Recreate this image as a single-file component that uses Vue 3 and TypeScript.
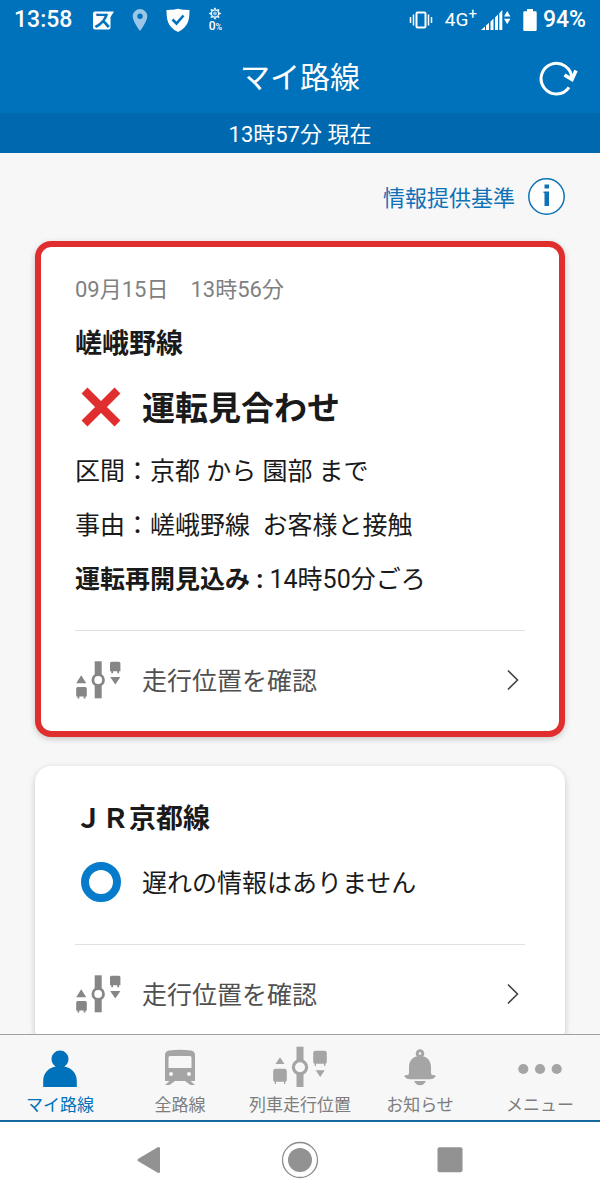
<script setup lang="ts">
import { ref } from 'vue'

interface Detail {
  label: string
  value: string
  strong?: boolean
}
interface RouteInfo {
  id: string
  name: string
  state: 'suspended' | 'normal'
  status: string
  date?: string
  details: Detail[]
}
type TabIcon = 'person' | 'train' | 'position' | 'bell' | 'more'
interface Tab {
  icon: TabIcon
  label: string
}

const routes: RouteInfo[] = [
  {
    id: 'sagano',
    name: '嵯峨野線',
    state: 'suspended',
    status: '運転見合わせ',
    date: '09月15日　13時56分',
    details: [
      { label: '区間：', value: '京都 から 園部 まで' },
      { label: '事由：', value: '嵯峨野線\u00a0 お客様と接触' },
      { label: '運転再開見込み : ', value: '14時50分ごろ', strong: true },
    ],
  },
  {
    id: 'jr-kyoto',
    name: 'ＪＲ京都線',
    state: 'normal',
    status: '遅れの情報はありません',
    details: [],
  },
]

const tabs: Tab[] = [
  { icon: 'person', label: 'マイ路線' },
  { icon: 'train', label: '全路線' },
  { icon: 'position', label: '列車走行位置' },
  { icon: 'bell', label: 'お知らせ' },
  { icon: 'more', label: 'メニュー' },
]
const active = ref<TabIcon>('person')
const rays = [0, 45, 90, 135, 180, 225, 270, 315]
</script>

<template>
  <div class="screen">
    <header class="header">
      <div class="statusbar">
        <div class="status-left">
          <span class="clock">13:58</span>
          <svg width="24" height="24" viewBox="0 0 24 24" aria-hidden="true">
            <path d="M5 3.500H24L20.500 9V19.500a2 2 0 0 1-2 2H5a2 2 0 0 1-2-2V5.500a2 2 0 0 1 2-2z" fill="#fff" />
            <text x="12" y="19" text-anchor="middle" class="app-glyph">ス</text>
          </svg>
          <svg width="16" height="24" viewBox="0 0 16 24" aria-hidden="true">
            <path d="M8 1a7.300 7.300 0 0 0-7.300 7.300C.7 13.500 8 23 8 23s7.300-9.500 7.300-14.700A7.300 7.300 0 0 0 8 1zm0 4.600a2.700 2.700 0 1 1 0 5.400 2.700 2.700 0 0 1 0-5.400z" fill="#9ac6e8" />
          </svg>
          <svg width="24" height="24" viewBox="0 0 24 24" aria-hidden="true">
            <path d="M12 .8C8.500 2 4 1.900.5 1.900c0 8 .5 17 11.500 22 11-5 11.500-14 11.500-22-3.500 0-8 .1-11.500-1.100z" fill="#fff" />
            <path d="M6.500 11.500l4 4 7-8" fill="none" stroke="#0072bb" stroke-width="2.600" />
          </svg>
          <div class="brightness">
            <svg width="14" height="13" viewBox="-7 -6.500 14 13" aria-hidden="true">
              <circle r="3.600" fill="none" stroke="#fff" stroke-width="1.200" />
              <circle r="2" fill="#9ac6e8" />
              <path v-for="r in rays" :key="r" d="M-1.400-4.200L0-6.200l1.400 2z" fill="#fff" :transform="`rotate(${r})`" />
            </svg>
            <span class="percent">0<small>%</small></span>
          </div>
        </div>
        <div class="status-right">
          <svg width="24" height="24" viewBox="0 0 24 24" fill="none" stroke="#fff" aria-hidden="true">
            <rect x="7.500" y="4.500" width="9" height="15" rx="1" stroke-width="2" />
            <path d="M4.500 6.500v11M19.500 6.500v11" stroke-width="1.500" />
            <path d="M1.500 9v6M22.500 9v6" stroke-width="1.500" />
          </svg>
          <div class="network">
            <span>4G<sup>+</sup></span>
            <svg width="30" height="24" viewBox="0 0 30 24" fill="#fff" aria-hidden="true">
              <path d="M0 22l4-3.500V22zM5 17.500l3-2.700V22H5zM9.500 13.500l3-2.900V22h-3zM14 9.400l3-2.900V22h-3zM18.300 5.300L21.300 2v20h-3z" />
              <path d="M23 8.500L26.200 3l3.200 5.500zM23 10.800h6.400l-3.200 5.500z" />
            </svg>
          </div>
          <div class="battery">
            <svg width="14" height="24" viewBox="0 0 14 24" fill="#fff" aria-hidden="true">
              <path d="M4 1h6v2.200h2.500a1.200 1.200 0 0 1 1.200 1.200v17.400a1.200 1.200 0 0 1-1.200 1.200h-11a1.200 1.200 0 0 1-1.200-1.200V4.400a1.200 1.200 0 0 1 1.200-1.200H4z" />
            </svg>
            <span>94%</span>
          </div>
        </div>
      </div>
      <div class="titlebar">
        <h1>マイ路線</h1>
        <button class="refresh" type="button" aria-label="更新">
          <svg width="40" height="40" viewBox="0 0 40 40" fill="none" stroke="#fff" aria-hidden="true">
            <path d="M31 29.300A15.300 15.300 0 1 1 33.700 20.500" stroke-width="3" />
            <path d="M26.500 17L34 21.500 38 12.500" stroke-width="3.600" />
          </svg>
        </button>
      </div>
      <p class="updated">13時57分 現在</p>
    </header>

    <main class="content">
      <a class="criteria" href="#criteria">
        <span>情報提供基準</span>
        <svg width="37" height="37" viewBox="0 0 37 37" aria-hidden="true">
          <circle cx="18.500" cy="18.500" r="17.700" fill="#fff" stroke="#0e72b8" stroke-width="1.500" />
          <path d="M16.500 6.500h4.500v4h-4.500zM15.500 13.500H21v14.500h-4.500V15h-1z" fill="#0e72b8" />
        </svg>
      </a>

      <article v-for="route in routes" :key="route.id" class="card" :class="route.state">
        <time v-if="route.date" class="date">{{ route.date }}</time>
        <h2>{{ route.name }}</h2>
        <div class="status">
          <svg width="40" height="40" viewBox="0 0 40 40" fill="none" aria-hidden="true">
            <path v-if="route.state === 'suspended'" d="M3.500 3.500L36.500 36.500M36.500 3.500L3.500 36.500" stroke="#e02d2d" stroke-width="8.300" />
            <circle v-else cx="20" cy="20" r="16" stroke="#067bcb" stroke-width="8" />
          </svg>
          <span>{{ route.status }}</span>
        </div>
        <ul v-if="route.details.length" class="details">
          <li v-for="d in route.details" :key="d.label">
            <span class="label" :class="{ strong: d.strong }">{{ d.label }}</span><span>{{ d.value }}</span>
          </li>
        </ul>
        <a class="position-link" :href="`#position-${route.id}`">
          <svg width="46" height="40" viewBox="0 0 46 40" fill="#868686" aria-hidden="true">
            <path d="M19.700 1.300h7v37h-7z" />
            <circle cx="23.200" cy="20" r="5.300" fill="#fff" stroke="#868686" stroke-width="2.800" />
            <path d="M1.200 23.200L6.200 15.300l5 7.900zM35.200 17h10.200l-5.100 7.600z" />
            <path d="M2.700 27h7.600a1.500 1.500 0 0 1 1.500 1.500v8h-1.300v2H8.700v-2H4.300v2H2.500v-2H1.200v-8A1.500 1.500 0 0 1 2.700 27z" />
            <path d="M36.500 1.700h7.400a1.500 1.500 0 0 1 1.500 1.500v8h-1.300v2h-1.800v-2h-4.200v2h-1.800v-2H35v-8a1.500 1.500 0 0 1 1.500-1.500z" />
          </svg>
          <span>走行位置を確認</span>
          <svg class="chevron" width="12" height="22" viewBox="0 0 12 22" fill="none" stroke="#444" stroke-width="1.600" aria-hidden="true">
            <path d="M1 1.500L10.500 11 1 20.500" />
          </svg>
        </a>
      </article>
    </main>

    <nav class="tabs" aria-label="メイン">
      <button
        v-for="tab in tabs"
        :key="tab.icon"
        type="button"
        class="tab"
        :class="{ active: active === tab.icon }"
        @click="active = tab.icon"
      >
        <svg width="60" height="42" viewBox="0 0 60 42" fill="currentColor" aria-hidden="true">
          <path
            v-if="tab.icon === 'person'"
            d="M30 4.500a8.500 8.500 0 0 1 8.500 8.500c0 3.500-1.800 6-4.200 7.500C42 22 46.800 27.500 46.800 35v6H13.200v-6c0-7.500 4.800-13 12.500-14.500-2.400-1.500-4.200-4-4.200-7.500A8.500 8.500 0 0 1 30 4.500z"
          />
          <path
            v-else-if="tab.icon === 'train'"
            fill-rule="evenodd"
            d="M19 4.500C26 3.500 34 3.500 41 4.500q4 .7 4 4.500v26h-4.500l4.500 4h-4.500l-5.500-4H25l-5.500 4H15l4.500-4H15V9q0-3.800 4-4.500zM20 10q-1.500 0-1.500 1.500V22h23V11.500Q41.500 10 40 10zM21 26a2 2 0 1 0 0 4 2 2 0 0 0 0-4zm18 0a2 2 0 1 0 0 4 2 2 0 0 0 0-4z"
          />
          <g v-else-if="tab.icon === 'position'">
            <path d="M26.500.7h7V41h-7z" />
            <circle cx="30" cy="21.300" r="6.600" fill="#f7f7f7" stroke="currentColor" stroke-width="3.200" />
            <path d="M5.500 18L10 11.200l4.500 6.800zM45.700 24.200h9L50.200 31z" />
            <path d="M5.500 22.700h9a2.300 2.300 0 0 1 2.300 2.300v9a1.700 1.700 0 0 1-1.500 1.700V38h-1.300v-2.300H6V38H4.700v-2.300A1.700 1.700 0 0 1 3.200 34v-9a2.300 2.300 0 0 1 2.300-2.300z" />
            <path d="M45.500 4.700h9A2.300 2.300 0 0 1 56.800 7v9a1.700 1.700 0 0 1-1.500 1.700V20H54v-2.300h-8V20h-1.300v-2.300a1.700 1.700 0 0 1-1.500-1.700V7a2.300 2.300 0 0 1 2.300-2.300z" />
          </g>
          <g v-else-if="tab.icon === 'bell'">
            <circle cx="30" cy="7.500" r="2.800" fill="none" stroke="currentColor" stroke-width="3" />
            <path d="M30 10c7 0 11 4.500 11 11v6q0 2 2 2.200l1.800-.2q1.200 1 .2 2.200-1.500 2-5 2H20q-3.500 0-5-2-1-1.200.2-2.200l1.800.2q2-.2 2-2.200v-6c0-6.500 4-11 11-11z" />
            <path d="M24.200 35h11.600q-1.800 4.300-5.800 4.300T24.200 35z" />
          </g>
          <g v-else>
            <circle cx="13.300" cy="23" r="5.100" />
            <circle cx="30" cy="23" r="5.100" />
            <circle cx="46.700" cy="23" r="5.100" />
          </g>
        </svg>
        <span>{{ tab.label }}</span>
      </button>
    </nav>

    <nav class="system" aria-label="システム">
      <button type="button" aria-label="戻る">
        <svg width="40" height="40" viewBox="0 0 40 40" aria-hidden="true">
          <path d="M28.500 8.500v23L9 20z" fill="#929292" stroke="#929292" stroke-width="3" stroke-linejoin="round" />
        </svg>
      </button>
      <button type="button" aria-label="ホーム">
        <svg width="40" height="40" viewBox="0 0 40 40" aria-hidden="true">
          <circle cx="20" cy="20" r="17.500" fill="none" stroke="#8c8c8c" stroke-width="1.300" />
          <circle cx="20" cy="20" r="12" fill="#929292" />
        </svg>
      </button>
      <button type="button" aria-label="履歴">
        <svg width="40" height="40" viewBox="0 0 40 40" aria-hidden="true">
          <rect x="7.500" y="7.200" width="25" height="25" rx="2" fill="#929292" />
        </svg>
      </button>
    </nav>
  </div>
</template>

<style>
body {
  margin: 0;
}
</style>

<style scoped>
.screen {
  display: flex;
  flex-direction: column;
  height: 100vh;
  background: #f7f7f7;
  color: #1a1a1a;
  font-family: Roboto, 'Noto Sans CJK JP', sans-serif;
  font-size: 25px;
}
.screen * {
  box-sizing: border-box;
}
svg {
  display: block;
  flex: none;
}
button {
  padding: 0;
  border: 0;
  background: none;
  font: inherit;
  color: inherit;
  cursor: pointer;
}
a {
  color: inherit;
  text-decoration: none;
}
h1,
h2,
p,
ul {
  margin: 0;
  padding: 0;
}
.header {
  flex: none;
  background: #0072bb;
  color: #fff;
}
.statusbar {
  display: flex;
  justify-content: space-between;
  align-items: center;
  height: 40px;
  padding: 0 14px;
  font-size: 23px;
  font-weight: 500;
  line-height: 40px;
}
.status-left,
.status-right,
.network,
.battery {
  display: flex;
  align-items: center;
}
.status-left {
  gap: 18px;
}
.status-right {
  gap: 12px;
}
.network {
  gap: 4px;
  font-size: 19px;
  font-weight: 400;
}
.network sup {
  font-size: 15px;
  line-height: 1;
}
.battery {
  gap: 6px;
}
.app-glyph {
  font-size: 18px;
  font-weight: 700;
  fill: #0072bb;
}
.brightness {
  display: flex;
  flex-direction: column;
  align-items: center;
}
.percent {
  font-size: 12px;
  line-height: 12px;
}
.percent small {
  font-size: 9px;
}
.titlebar {
  display: grid;
  grid-template-columns: 1fr auto 1fr;
  align-items: center;
  height: 73px;
  padding: 2px 22px 0;
}
.titlebar h1 {
  grid-column: 2;
  font-size: 30px;
  font-weight: 400;
  line-height: 40px;
}
.refresh {
  justify-self: end;
}
.updated {
  height: 40px;
  padding-top: 3px;
  background: #0068ae;
  font-size: 22px;
  line-height: 37px;
  text-align: center;
}
.content {
  flex: 1;
  min-height: 0;
  overflow-y: auto;
  scrollbar-width: none;
  padding: 25px 35px;
}
.criteria {
  display: flex;
  justify-content: flex-end;
  align-items: center;
  gap: 13px;
  margin-bottom: 26px;
  color: #0e72b8;
  font-size: 22px;
  line-height: 33px;
}
.criteria span {
  padding-top: 3px;
}
.card {
  padding: 33px 40px 0;
  border-radius: 16px;
  background: #fff;
  box-shadow: 0 2px 6px rgba(0, 0, 0, 0.2);
}
.card + .card {
  margin-top: 29px;
}
.card.suspended {
  padding: 28px 34px 0;
  border: 6px solid #e02d2d;
}
.date {
  display: block;
  margin-bottom: 19px;
  color: #808080;
  font-size: 22px;
  line-height: 30px;
}
.card h2 {
  font-size: 27px;
  font-weight: 700;
  line-height: 40px;
}
.status {
  display: flex;
  align-items: center;
  gap: 21px;
  height: 50px;
  margin: 18px 0 37px;
  padding-left: 6px;
  line-height: 40px;
}
.status span {
  padding-top: 4px;
}
.suspended .status {
  margin-bottom: 13px;
  font-size: 33px;
  font-weight: 700;
}
.details {
  margin-bottom: 23px;
  list-style: none;
  line-height: 54px;
}
.label {
  white-space: pre;
}
.strong {
  font-weight: 700;
}
.position-link {
  display: flex;
  align-items: center;
  gap: 21px;
  height: 101px;
  padding-bottom: 2px;
  border-top: 1px solid #e0e0e0;
  color: #505050;
}
.position-link span {
  padding-bottom: 2px;
}
.chevron {
  margin-left: auto;
  margin-right: 6px;
}
.tabs {
  display: grid;
  grid-template-columns: repeat(5, 1fr);
  flex: none;
  border-top: 1px solid #a0a0a0;
  border-bottom: 2px solid #17689f;
  background: #f7f7f7;
}
.tab {
  display: flex;
  flex-direction: column;
  align-items: center;
  gap: 6px;
  padding: 11px 0 4px;
  color: #a5a5a5;
  font-size: 17px;
  line-height: 22px;
  white-space: nowrap;
}
.tab span {
  color: #7d7d7d;
}
.tab.active,
.tab.active span {
  color: #0072bb;
}
.system {
  display: grid;
  grid-template-columns: repeat(3, 1fr);
  justify-items: center;
  align-items: center;
  flex: none;
  height: 78px;
  padding: 0 12.5% 2px;
  background: #fff;
}
</style>
